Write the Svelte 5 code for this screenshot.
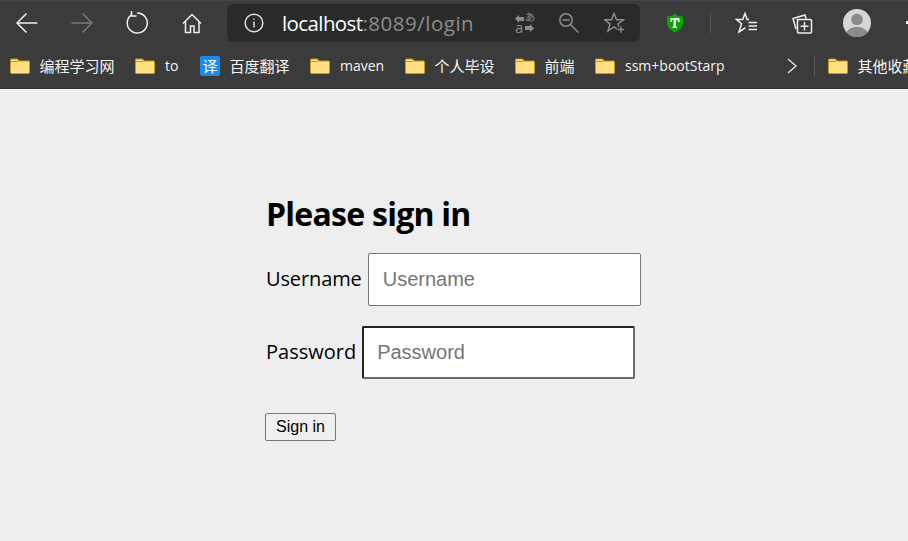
<script>
  const bookmarks = [
    { label: "编程学习网", w: 125, cjk: true },
    { label: "to", w: 65 },
    { label: "百度翻译", icon: "baidu", w: 110, cjk: true },
    { label: "maven", w: 95 },
    { label: "个人毕设", w: 110, cjk: true },
    { label: "前端", w: 80, cjk: true },
    { label: "ssm+bootStarp", w: 192 }
  ];
</script>

<div class="browser">
  <div class="toolbar">
    <button class="nav" aria-label="back">
      <svg width="24" height="24" viewBox="0 0 24 24"><path d="M22.500 12H2.500M11.500 2.500L2 12l9.500 9.500" /></svg>
    </button>
    <button class="nav dim" aria-label="forward">
      <svg width="24" height="24" viewBox="0 0 24 24"><path d="M1.500 12h20M12.500 2.500L22 12l-9.500 9.500" /></svg>
    </button>
    <button class="nav" aria-label="reload">
      <svg width="24" height="24" viewBox="0 0 24 24"><path d="M6 4.200A10 10 0 1 0 12 2M6.500 0v5h5" /></svg>
    </button>
    <button class="nav" aria-label="home">
      <svg width="24" height="24" viewBox="0 0 24 24"><path d="M3 12.500L12 3.500l9 9M5.500 11v10.500h5v-6.500h3.500v6.500h5V11" /></svg>
    </button>
    <div class="address">
      <svg class="info" width="20" height="20" viewBox="0 0 20 20"><circle cx="10" cy="10" r="8.800" /><path d="M10 8.500v6M10 5.500v1.300" /></svg>
      <span class="url"><span class="host">localhost</span>:8089/login</span>
      <span class="translate">
        <svg width="20" height="21" viewBox="0 0 20 21">
          <path class="solid" d="M0 6.500L4 3v2h5v4H4v2zM19 16.500L15 20v-2h-5v-4h5v-2z" />
        </svg>
        <span class="kana">あ</span>
        <span class="a">a</span>
      </span>
      <svg class="zoom" width="20" height="20" viewBox="0 0 20 20"><circle cx="7" cy="7" r="6.200" /><path d="M3.500 7h7M11.500 11.500L19.500 19.500" /></svg>
      <svg class="fav" width="21" height="21" viewBox="0 0 21 21">
        <path d="M10 1.500l2.500 6.200h7l-5.500 4.300 2 7-6-4-6 4 2-7-5.500-4.300h7z" />
        <path class="knock" d="M13 17.500h7.500M16.800 13.800v7" />
        <path d="M13.500 17.500h6.500M16.800 14.300v6.500" />
      </svg>
    </div>
    <svg class="shield" width="20" height="20" viewBox="0 0 20 20">
      <path d="M10 0.500l3 2.500 5 .500v6c0 5-4 8-8 10-4-2-8-5-8-10v-6l5-.500z" />
      <path d="M5.500 5h9v4h-1.500l-.5-2h-1.500v6.500l1 .5v1h-4.500v-1l1-.5V7H7l-.5 2H5.500z" />
    </svg>
    <span class="sep"></span>
    <button class="nav" aria-label="favorites">
      <svg width="24" height="24" viewBox="0 0 24 24"><path d="M14 8.500h-1.800L10 2.500 7.700 8.500H1.500l5 4.300L4 21l6.500-4.300M13.500 11.500h8.500M13.500 15h8.500M13.500 18.500h8.500" /></svg>
    </button>
    <button class="nav" aria-label="collections">
      <svg width="24" height="24" viewBox="0 0 24 24"><path d="M6 18L3 7.500 15 4l1 3.500M7.500 8.500h13a1 1 0 0 1 1 1V21a1 1 0 0 1-1 1H8.500a1 1 0 0 1-1-1zM14.500 11v8.500M10.500 15.300h8" /></svg>
    </button>
    <svg class="avatar" width="28" height="28" viewBox="0 0 28 28">
      <circle cx="14" cy="14" r="14" />
      <circle cx="14" cy="10.500" r="5.800" />
      <path d="M3.500 23.500c2-4 6-5.500 10.500-5.500s8.500 1.500 10.500 5.500a14 14 0 0 1-21 0z" />
    </svg>
    <span class="more"></span>
  </div>

  <div class="bookmarks">
    {#each bookmarks as b}
      <div class="bookmark" style="width: {b.w}px">
        {#if b.icon}
          <span class="baidu">译</span>
        {:else}
          <svg class="folder" width="20" height="16" viewBox="0 0 20 16"><path d="M.5 2a1 1 0 0 1 1-1h6l1.500 2h9.500a1 1 0 0 1 1 1v10.500a1 1 0 0 1-1 1h-17a1 1 0 0 1-1-1z" /><path d="M1 3.500h7" /></svg>
        {/if}
        <span class="name" class:cjk={b.cjk}>{b.label}</span>
      </div>
    {/each}
    <svg class="chevron" width="10" height="16" viewBox="0 0 10 16"><path d="M1 1l8 7-8 7" /></svg>
    <span class="sep small"></span>
    <div class="bookmark other">
      <svg class="folder" width="20" height="16" viewBox="0 0 20 16"><path d="M.5 2a1 1 0 0 1 1-1h6l1.500 2h9.500a1 1 0 0 1 1 1v10.500a1 1 0 0 1-1 1h-17a1 1 0 0 1-1-1z" /><path d="M1 3.500h7" /></svg>
      <span class="name cjk">其他收藏夹</span>
    </div>
  </div>

  <main>
    <form onsubmit={(e) => e.preventDefault()}>
      <h2>Please sign in</h2>
      <p class="user">
        <label for="username">Username</label>
        <input id="username" type="text" placeholder="Username" />
      </p>
      <p>
        <label for="password">Password</label>
        <input id="password" class="focus" type="password" placeholder="Password" />
      </p>
      <button class="submit" type="submit">Sign in</button>
    </form>
  </main>
</div>

<style>
  :global(body) {
    margin: 0;
    background: #eeeeee;
  }
  .browser {
    width: 908px;
    height: 541px;
    overflow: hidden;
    font-family: "Open Sans", "Noto Sans CJK SC", sans-serif;
  }
  svg path, svg circle {
    fill: none;
    stroke: currentColor;
    stroke-width: 1.5;
  }
  svg.shield path, svg.avatar path, svg.avatar circle {
    stroke: none;
  }
  svg.folder path {
    stroke-width: 1;
  }
  svg.folder path:first-child {
    fill: #ffdf80;
    stroke: #c79a0c;
  }
  svg.folder path:last-child {
    stroke: #c79a0c;
  }
  svg.shield path:first-child { fill: #0aa50a; }
  svg.shield path:last-child { fill: #fff; }
  svg.avatar circle:first-child { fill: #d6d6d6; }
  svg.avatar circle:nth-child(2), svg.avatar path { fill: #8a8a8a; }

  .toolbar {
    height: 44px;
    background: #3b3b3b;
    display: flex;
    align-items: center;
    color: #f0f0f0;
    padding-left: 15px;
    box-sizing: border-box;
    border-top: 1px solid #444;
  }
  .nav {
    width: 24px;
    height: 24px;
    padding: 0;
    border: 0;
    background: none;
    color: inherit;
    margin-right: 31px;
    display: block;
    flex: none;
  }
  .nav svg { display: block; }
  .dim { color: #777; }
  .toolbar > .nav:nth-child(4) { margin-right: 23px; }
  .address {
    width: 413px;
    height: 38px;
    flex: none;
    background: #2a2a2a;
    border-radius: 6px;
    display: flex;
    align-items: center;
    padding-left: 17px;
    box-sizing: border-box;
    color: #ddd;
    margin-right: 25px;
  }
  .url {
    margin-left: 18px;
    font-size: 20.500px;
    letter-spacing: 0.5px;
    color: #8c8c8c;
    width: 233px;
    white-space: nowrap;
  }
  .host { color: #fff; letter-spacing: -0.6px; }
  .translate {
    width: 20px;
    height: 21px;
    position: relative;
    color: #8c8c8c;
    margin-right: 24px;
    flex: none;
  }
  .translate svg { display: block; }
  .translate svg path.solid { fill: #8c8c8c; stroke: none; }
  .translate .a {
    position: absolute;
    left: 0;
    bottom: 0;
    font-size: 15px;
    line-height: 11px;
  }
  .translate .kana {
    position: absolute;
    right: 0;
    top: 0;
    font-size: 10px;
    line-height: 11px;
  }
  .zoom {
    color: #8c8c8c;
    margin-right: 25px;
    flex: none;
  }
  .fav { color: #8c8c8c; flex: none; }
  .fav .knock { stroke: #2a2a2a; stroke-width: 4; }
  .shield { margin-right: 25px; flex: none; }
  .sep {
    width: 1px;
    height: 20px;
    background: #5c5c5c;
    margin-right: 24px;
    flex: none;
  }
  .avatar { margin-left: -2px; flex: none; }
  .more {
    width: 3px;
    height: 3px;
    background: #eee;
    margin-left: 35px;
    flex: none;
  }
  .bookmarks {
    height: 45px;
    background: #3b3b3b;
    border-bottom: 1px solid #2f2f2f;
    box-sizing: border-box;
    display: flex;
    align-items: center;
    padding-left: 10px;
    color: #f5f5f5;
    font-size: 14px;
    white-space: nowrap;
  }
  .bookmark {
    display: flex;
    align-items: center;
    gap: 10px;
    flex: none;
  }
  .name { padding-bottom: 2px; }
  .cjk { font-size: 15px; margin-left: -0.5px; }
  .baidu {
    width: 20px;
    height: 20px;
    background: #1a8cf0;
    border-radius: 2px;
    color: #fff;
    font-size: 15px;
    line-height: 20px;
    text-align: center;
  }
  .chevron {
    color: #ddd;
    flex: none;
    margin-right: 17px;
  }
  .sep.small { margin-right: 13px; }
  main {
    padding: 103px 0 0 265px;
  }
  h2 {
    margin: 0 0 17px 1px;
    font-size: 32px;
    line-height: 44px;
    font-weight: 700;
    color: #000;
    letter-spacing: -0.75px;
  }
  p {
    margin: 0 0 20px 1px;
    display: flex;
    align-items: center;
    gap: 6px;
    font-size: 20px;
    color: #000;
  }
  label { padding-bottom: 2px; }
  .user label { letter-spacing: -0.12px; }
  input {
    width: 273px;
    height: 53px;
    box-sizing: border-box;
    padding: 0 14px;
    border: 1px solid #767676;
    border-radius: 2px;
    background: #fff;
    font-family: "Liberation Sans", sans-serif;
    font-size: 20px;
    outline: none;
  }
  input::placeholder { color: #757575; opacity: 1; }
  input.focus {
    border: 2px solid;
    border-color: #222 #6c6c6c #6c6c6c #222;
    padding-left: 13px;
  }
  .submit {
    width: 71px;
    height: 28px;
    margin-top: 14px;
    padding: 0;
    border: 1px solid #767676;
    border-radius: 2px;
    background: #efefef;
    font-family: "Liberation Sans", sans-serif;
    font-size: 16px;
    color: #000;
  }
</style>
